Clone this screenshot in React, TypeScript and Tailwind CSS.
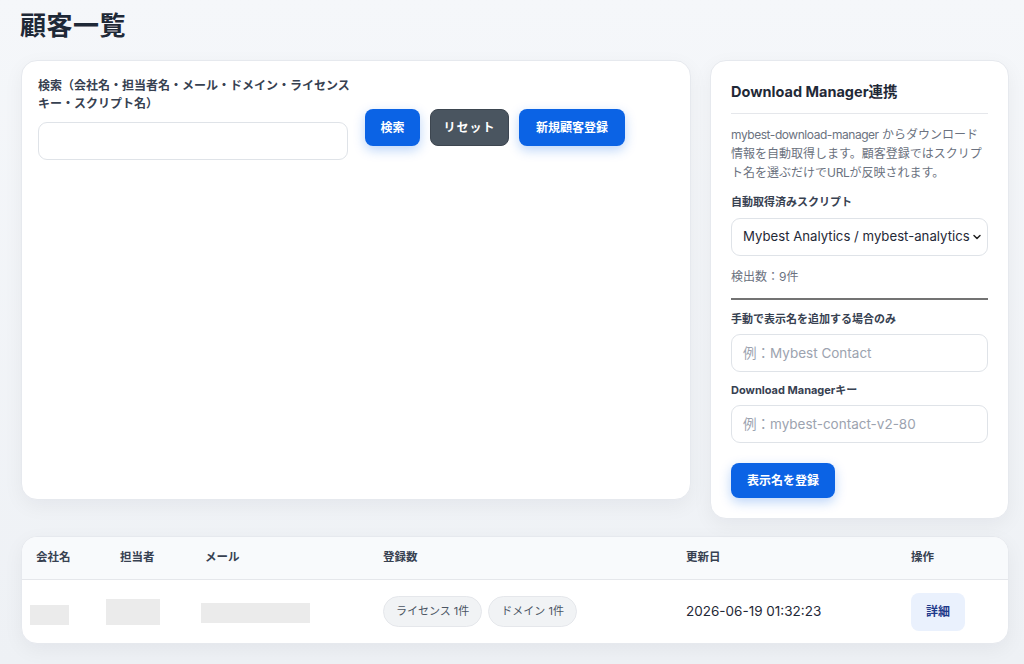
import React from "react";

const FONT = 'Inter, "Noto Sans CJK JP", "Noto Sans", sans-serif';

function Chevron() {
  return (
    <svg width="10" height="10" viewBox="0 0 10 10" fill="none" className="shrink-0">
      <path d="M2 3.5 L5 6.5 L8 3.5" stroke="#222" strokeWidth="1.5" strokeLinecap="round" strokeLinejoin="round" />
    </svg>
  );
}

export default function App() {
  return (
    <div
      className="min-h-screen w-full bg-gradient-to-b from-[#f5f7fa] to-[#eef1f5] pl-[20px] pr-[15px] pt-[10px] text-[#1f2937]"
      style={{ fontFamily: FONT }}
    >
      <h1 className="text-[26px] leading-[32px] font-bold tracking-[0.5px] text-[#1f2937]">顧客一覧</h1>

      <div className="mt-[18px] flex items-start gap-[19px]">
        {/* Left search card */}
        <div className="ml-[1px] h-[440px] w-[670px] rounded-[16px] border border-[#e6e9ee] bg-white px-[16px] pt-[16px] shadow-[0_6px_20px_rgba(15,23,42,0.05)]">
          <div className="flex items-start gap-[17px]">
            <div className="w-[310px]">
              <div className="w-[318px] text-[12px] font-bold leading-[18px] text-[#374151]">
                検索（会社名・担当者名・メール・ドメイン・ライセンスキー・スクリプト名）
              </div>
              <div className="mt-[9px] h-[38px] w-[310px] rounded-[9px] border border-[#dfe3e8] bg-white" />
            </div>
            <div className="mt-[32px] flex gap-[10px]">
              <button className="h-[37px] w-[55px] rounded-[8px] bg-[#0b63e5] text-[12px] font-bold text-white shadow-[0_4px_12px_rgba(11,99,229,0.28)]">
                検索
              </button>
              <button className="h-[37px] w-[79px] rounded-[8px] border border-[#3d4650] bg-[#4a5560] text-[12px] font-bold tracking-[1px] text-white">
                リセット
              </button>
              <button className="h-[37px] w-[106px] rounded-[8px] bg-[#0b63e5] text-[12px] font-bold text-white shadow-[0_4px_12px_rgba(11,99,229,0.28)]">
                新規顧客登録
              </button>
            </div>
          </div>
        </div>

        {/* Right Download Manager card */}
        <div className="w-[299px] rounded-[16px] border border-[#e6e9ee] bg-white px-[20px] pb-[20px] pt-[21px] shadow-[0_6px_20px_rgba(15,23,42,0.05)]">
          <div className="border-b border-[#e5e7eb] pb-[11px] text-[14.5px] font-bold leading-[20px] text-[#1f2937]">
            Download Manager連携
          </div>
          <p className="mt-[11px] text-[12px] leading-[19px] text-[#6b7280]">
            <span className="tracking-[-0.45px]">mybest-download-manager</span> からダウンロード情報を自動取得します。顧客登録ではスクリプト名を選ぶだけで<span className="tracking-[-0.3px]">URL</span>が反映されます。
          </p>
          <div className="mt-[12px] text-[11px] font-bold leading-[16px] text-[#374151]">自動取得済みスクリプト</div>
          <div className="mt-[8px] flex h-[38px] items-center gap-[2px] rounded-[9px] border border-[#dfe3e8] bg-white pl-[11px] pr-[5px]">
            <span className="flex-1 overflow-hidden whitespace-nowrap text-[13.2px] text-[#1f2937]">
              Mybest Analytics / mybest-analytics-v1
            </span>
            <Chevron />
          </div>
          <div className="mt-[12px] text-[12px] leading-[18px] text-[#6b7280]">検出数：9件</div>
          <div className="mt-[12px] border-t-2 border-[#737373]" />
          <div className="mt-[11px] text-[11px] font-bold leading-[16px] text-[#374151]">手動で表示名を追加する場合のみ</div>
          <div className="mt-[7px] flex h-[38px] items-center rounded-[9px] border border-[#dfe3e8] bg-white px-[11px] text-[13.5px] text-[#9ca3af]">
            例：Mybest Contact
          </div>
          <div className="mt-[10px] text-[11px] font-bold leading-[16px] text-[#374151]">Download Managerキー</div>
          <div className="mt-[7px] flex h-[38px] items-center rounded-[9px] border border-[#dfe3e8] bg-white px-[11px] text-[13.5px] text-[#9ca3af]">
            例：mybest-contact-v2-80
          </div>
          <button className="mt-[20px] h-[35px] w-[104px] rounded-[8px] bg-[#0b63e5] text-[12px] font-bold text-white shadow-[0_4px_12px_rgba(11,99,229,0.28)]">
            表示名を登録
          </button>
        </div>
      </div>

      {/* Table */}
      <div className="ml-[1px] mt-[17px] w-[988px] overflow-hidden rounded-[16px] border border-[#e6e9ee] bg-white shadow-[0_6px_20px_rgba(15,23,42,0.05)]">
        <div className="grid h-[43px] grid-cols-[84px_85px_178px_303px_225px_1fr] items-center border-b border-[#e5e7eb] bg-[#f8fafc] pl-[14px] text-[11.5px] font-semibold text-[#374151]">
          <div>会社名</div>
          <div>担当者</div>
          <div>メール</div>
          <div>登録数</div>
          <div>更新日</div>
          <div>操作</div>
        </div>
        <div className="grid h-[63px] grid-cols-[84px_85px_178px_303px_225px_1fr] items-center pl-[14px]">
          <div>
            <div className="-ml-[6px] mt-[6px] h-[20px] w-[39px] bg-[#ebebeb]" />
          </div>
          <div>
            <div className="-ml-[14px] h-[26px] w-[54px] bg-[#ebebeb]" />
          </div>
          <div>
            <div className="-ml-[4px] mt-[2px] h-[20px] w-[109px] bg-[#ebebeb]" />
          </div>
          <div className="flex gap-[6px]">
            <span className="flex h-[31px] items-center rounded-full border border-[#e5e7eb] bg-[#f1f3f5] px-[12px] text-[11px] text-[#4b5563]">
              ライセンス 1件
            </span>
            <span className="flex h-[31px] items-center rounded-full border border-[#e5e7eb] bg-[#f1f3f5] px-[12px] text-[11px] text-[#4b5563]">
              ドメイン 1件
            </span>
          </div>
          <div className="text-[13.5px] text-[#1f2937]">2026-06-19 01:32:23</div>
          <div>
            <button className="h-[38px] w-[54px] rounded-[8px] bg-[#eaf1fd] text-[12px] font-bold text-[#1e3a8a]">
              詳細
            </button>
          </div>
        </div>
      </div>
    </div>
  );
}
